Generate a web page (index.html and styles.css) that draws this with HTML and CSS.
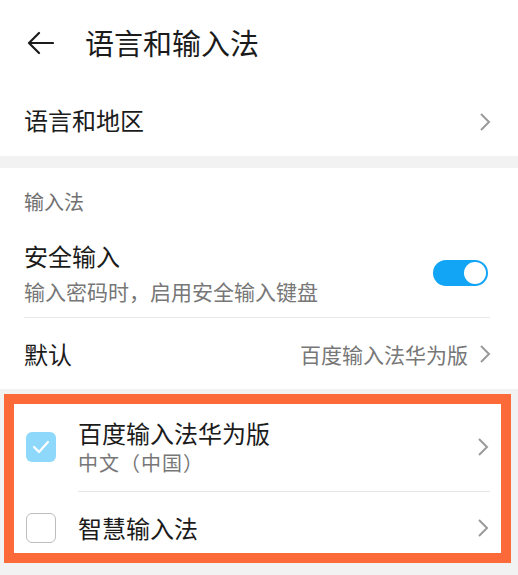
FILE: index.html
```html
<!DOCTYPE html>
<html lang="zh-CN">
<head>
  <meta charset="UTF-8">
  <meta name="viewport" content="width=device-width, initial-scale=1.0">
  <title>语言和输入法</title>
  <link rel="stylesheet" href="styles.css">
</head>
<body>
  <div class="page">
    <div class="header">
      <svg class="back" width="28" height="24" viewBox="0 0 28 24">
        <path d="M13 2 L3 12 L13 22 M3 12 H27" fill="none" stroke="#1b1b1b" stroke-width="2.2" stroke-linecap="round" stroke-linejoin="round"/>
      </svg>
      <h1>语言和输入法</h1>
    </div>

    <div class="section">
      <div class="row row-plain">
        <span class="row-title">语言和地区</span>
        <svg class="chev" width="12" height="20" viewBox="0 0 12 20"><path d="M2 2 L10 10 L2 18" fill="none" stroke="#9a9a9a" stroke-width="2"/></svg>
      </div>
    </div>

    <div class="section">
      <div class="label">输入法</div>
      <div class="row row-switch">
        <div class="row-text">
          <div class="row-title">安全输入</div>
          <div class="row-sub">输入密码时，启用安全输入键盘</div>
        </div>
        <div class="toggle"><div class="knob"></div></div>
      </div>
      <div class="row row-plain">
        <span class="row-title">默认</span>
        <span class="row-value">百度输入法华为版</span>
        <svg class="chev" width="12" height="20" viewBox="0 0 12 20"><path d="M2 2 L10 10 L2 18" fill="none" stroke="#9a9a9a" stroke-width="2"/></svg>
      </div>
    </div>

    <div class="highlight">
      <div class="ime ime-first">
        <div class="check checked">
          <svg width="18" height="14" viewBox="0 0 18 14"><path d="M2 7 L7 12 L16 2" fill="none" stroke="#fff" stroke-width="2.2" stroke-linecap="round" stroke-linejoin="round"/></svg>
        </div>
        <div class="ime-body">
          <div class="ime-text">
            <div class="row-title">百度输入法华为版</div>
            <div class="row-sub">中文（中国）</div>
          </div>
          <svg class="chev" width="12" height="20" viewBox="0 0 12 20"><path d="M2 2 L10 10 L2 18" fill="none" stroke="#9a9a9a" stroke-width="2"/></svg>
        </div>
      </div>
      <div class="ime ime-last">
        <div class="check"></div>
        <div class="ime-body">
          <div class="ime-text">
            <div class="row-title">智慧输入法</div>
          </div>
          <svg class="chev" width="12" height="20" viewBox="0 0 12 20"><path d="M2 2 L10 10 L2 18" fill="none" stroke="#9a9a9a" stroke-width="2"/></svg>
        </div>
      </div>
    </div>
  </div>
</body>
</html>
```

FILE: styles.css
```css
body {
  margin: 0;
  background: #f2f2f2;
  font-family: "Noto Sans CJK SC", "Noto Sans", sans-serif;
  color: #1b1b1b;
}
.page {
  width: 518px;
  height: 575px;
  overflow: hidden;
}
.header {
  display: flex;
  align-items: center;
  box-sizing: border-box;
  height: 88px;
  padding: 0 24px 2px 26px;
  background: #fff;
}
.back {
  flex: none;
}
.header h1 {
  margin: 0 0 2px 31px;
  font-size: 29px;
  font-weight: 400;
  line-height: 36px;
}
.section {
  background: #fff;
  margin-bottom: 12px;
}
.section:nth-of-type(3) {
  margin-bottom: 5px;
}
.row {
  display: flex;
  align-items: center;
  margin: 0 28px 0 24px;
}
.row-plain {
  box-sizing: border-box;
  height: 68px;
}
.section:nth-of-type(2) .row-plain .row-title {
  margin-bottom: 4px;
}
.section:nth-of-type(3) .row-plain {
  height: 71px;
}
.row-title {
  font-size: 24px;
  line-height: 32px;
}
.row-plain .row-title {
  flex: 1;
}
.chev {
  flex: none;
  margin-right: -1px;
}
.label {
  padding: 20px 24px 2px;
  font-size: 20px;
  line-height: 28px;
  color: #6f6f6f;
}
.row-switch {
  padding: 22px 0 12px;
  border-bottom: 1px solid #e8e8e8;
}
.row-text {
  flex: 1;
}
.row-sub {
  margin-top: 5px;
  font-size: 21px;
  line-height: 28px;
  color: #777;
}
.row-value {
  margin-right: 11px;
  font-size: 21px;
  color: #777;
}
.toggle {
  position: relative;
  width: 55px;
  height: 26px;
  margin-right: 2px;
  border-radius: 13px;
  background: #12a4f5;
}
.knob {
  position: absolute;
  top: 2px;
  right: 2px;
  width: 22px;
  height: 22px;
  border-radius: 50%;
  background: #fff;
}
.highlight {
  margin: 0 7px 0 4px;
  border: 10px solid #fd6a3a;
  background: #fff;
}
.ime {
  display: flex;
  align-items: center;
  padding-left: 12px;
}
.check {
  flex: none;
  box-sizing: border-box;
  width: 30px;
  height: 30px;
  margin-right: 22px;
  border: 1.5px solid #bdbdbd;
  border-radius: 6px;
  display: flex;
  align-items: center;
  justify-content: center;
}
.check.checked {
  border: none;
  background: #8ed9fb;
}
.ime-first .check {
  margin-top: -3px;
}
.ime-body {
  flex: 1;
  display: flex;
  align-items: center;
  padding-right: 13px;
}
.ime-first .ime-body {
  padding-top: 13px;
  padding-bottom: 14px;
  margin-right: 11px;
  padding-right: 2px;
  border-bottom: 1px solid #e6e6e6;
}
.ime-first .row-sub {
  margin-top: 0;
  font-size: 20px;
  letter-spacing: 1px;
}
.ime-last {
  box-sizing: border-box;
  height: 61px;
  padding-top: 11px;
}
.ime-text {
  flex: 1;
}
```
